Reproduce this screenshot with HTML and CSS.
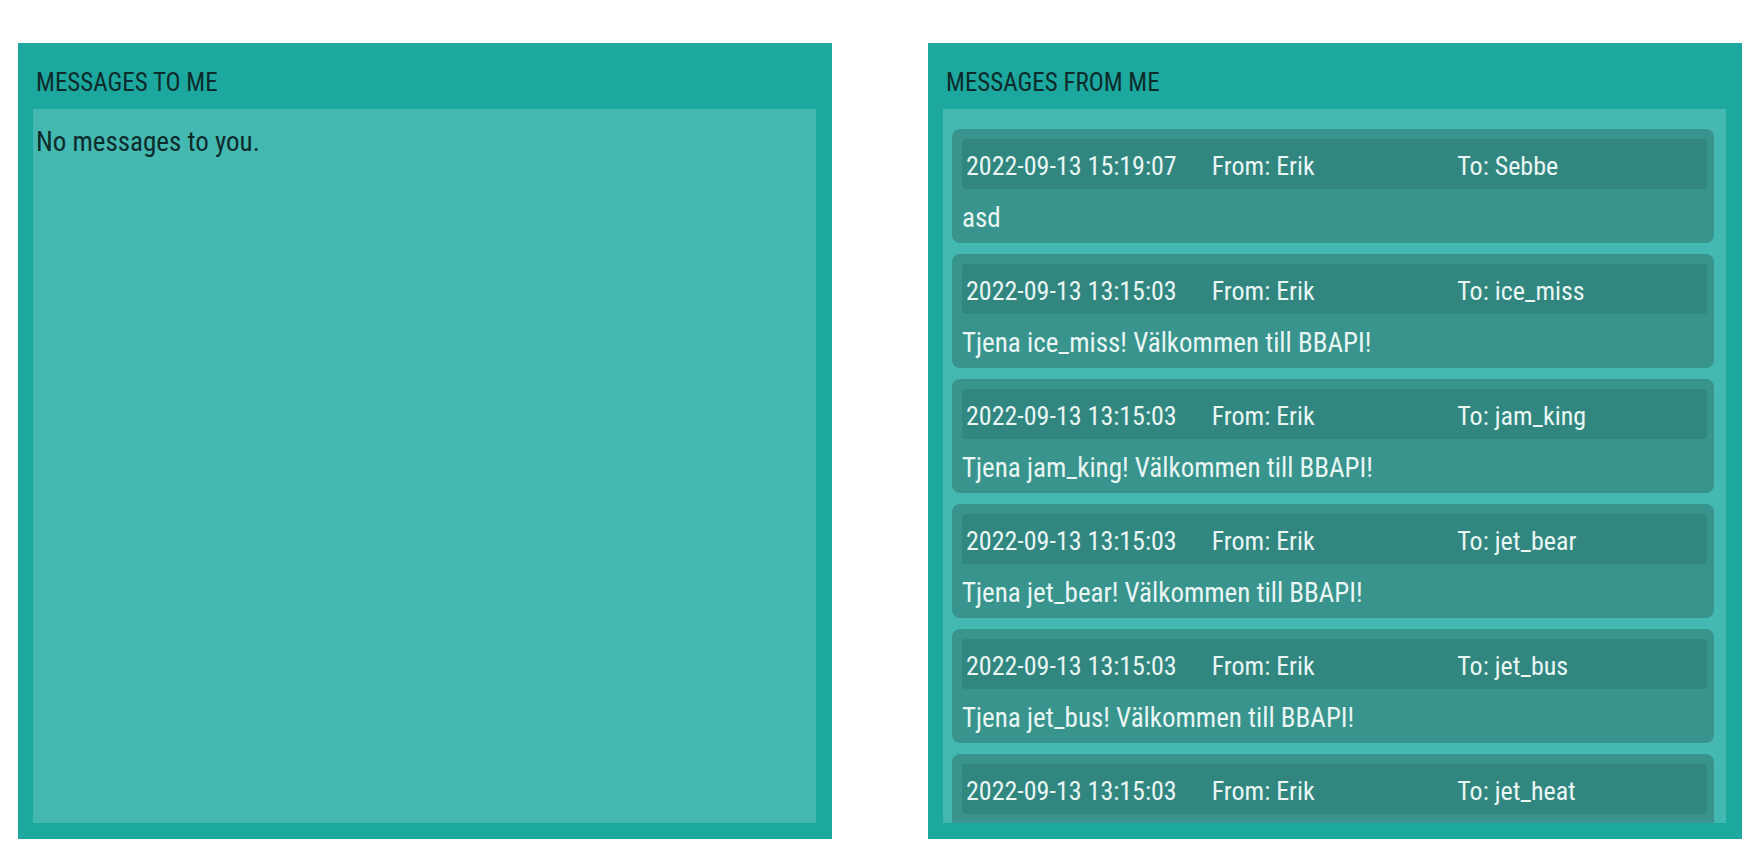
FILE: index.html
```html
<!DOCTYPE html>
<html lang="sv">
<head>
<meta charset="utf-8">
<title>Messages</title>
<link rel="stylesheet" href="styles.css">
</head>
<body>
<main class="page">
  <section class="panel">
    <h2 class="panel-title">MESSAGES TO ME</h2>
    <div class="panel-body">
      <p class="empty">No messages to you.</p>
    </div>
  </section>
  <section class="panel">
    <h2 class="panel-title">MESSAGES FROM ME</h2>
    <div class="panel-body list">
      <article class="msg">
        <div class="msg-head"><span>2022-09-13 15:19:07</span><span>From: Erik</span><span>To: Sebbe</span></div>
        <p class="msg-text">asd</p>
      </article>
      <article class="msg">
        <div class="msg-head"><span>2022-09-13 13:15:03</span><span>From: Erik</span><span>To: ice_miss</span></div>
        <p class="msg-text">Tjena ice_miss! Välkommen till BBAPI!</p>
      </article>
      <article class="msg">
        <div class="msg-head"><span>2022-09-13 13:15:03</span><span>From: Erik</span><span>To: jam_king</span></div>
        <p class="msg-text">Tjena jam_king! Välkommen till BBAPI!</p>
      </article>
      <article class="msg">
        <div class="msg-head"><span>2022-09-13 13:15:03</span><span>From: Erik</span><span>To: jet_bear</span></div>
        <p class="msg-text">Tjena jet_bear! Välkommen till BBAPI!</p>
      </article>
      <article class="msg">
        <div class="msg-head"><span>2022-09-13 13:15:03</span><span>From: Erik</span><span>To: jet_bus</span></div>
        <p class="msg-text">Tjena jet_bus! Välkommen till BBAPI!</p>
      </article>
      <article class="msg">
        <div class="msg-head"><span>2022-09-13 13:15:03</span><span>From: Erik</span><span>To: jet_heat</span></div>
        <p class="msg-text">Tjena jet_heat! Välkommen till BBAPI!</p>
      </article>
    </div>
  </section>
</main>
</body>
</html>
```

FILE: styles.css
```css
html, body {
  margin: 0;
  padding: 0;
  background: #ffffff;
}

body {
  font-family: "Roboto", "DejaVu Sans Condensed", sans-serif;
  font-stretch: 75%;
  width: 1761px;
  height: 855px;
  overflow: hidden;
}

.page {
  display: flex;
  gap: 96px;
  padding: 43px 0 0 18px;
}

.panel {
  width: 814px;
  height: 796px;
  box-sizing: border-box;
  background: #1ca89f;
  padding: 0 16px 16px 15px;
  display: flex;
  flex-direction: column;
}

.panel-title {
  margin: 0;
  height: 66px;
  box-sizing: border-box;
  padding: 25px 0 0 3px;
  font-size: 25px;
  line-height: 30px;
  font-weight: normal;
  color: #0d2b2a;
  white-space: nowrap;
}

.panel-body {
  flex: 1;
  background: #44b9b2;
  overflow: hidden;
  min-height: 0;
}

.empty {
  margin: 0;
  padding: 16px 0 0 3px;
  font-size: 27px;
  line-height: 34px;
  color: #0d2b2a;
  white-space: nowrap;
}

.list {
  display: flex;
  flex-direction: column;
  gap: 11px;
  padding: 20px 12px 0 9px;
}

.msg {
  flex-shrink: 0;
  background: #38948d;
  border-radius: 8px;
  padding: 10px 7px 8px 10px;
  color: #e9f6f4;
}

.msg-head {
  display: grid;
  grid-template-columns: repeat(3, 1fr);
  height: 50px;
  box-sizing: border-box;
  padding: 4px 4px 0 4px;
  font-size: 26px;
  line-height: 46px;
  background: #318780;
  border-radius: 4px;
  white-space: nowrap;
}

.msg-text {
  margin: 12px 0 0 0;
  font-size: 27px;
  line-height: 34px;
  white-space: nowrap;
}
```
